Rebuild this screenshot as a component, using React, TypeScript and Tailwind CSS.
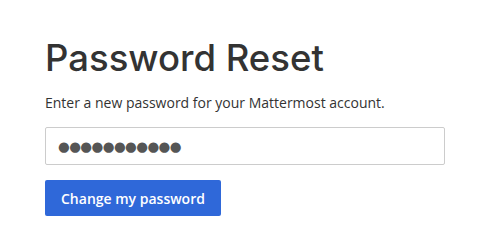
export default function App() {
  return (
    <div className="min-h-screen bg-white px-[45px] pt-[34px]" style={{ fontFamily: '"Open Sans", sans-serif' }}>
      <h1 className="text-[36.5px] font-[550] leading-[48px] text-[#333]" style={{ fontFamily: 'Inter, "Open Sans", sans-serif' }}>
        Password Reset
      </h1>
      <p className="mt-[11px] text-[14px] leading-[20px] text-[#333]">Enter a new password for your Mattermost account.</p>
      <div className="mt-[14px] w-[400px]">
        <input
          type="text"
          readOnly
          value="●●●●●●●●●●●"
          className="h-[38px] w-full rounded-[2px] border border-[#ccc] px-[12px] text-[13.5px] tracking-[-0.6px] text-[#555] outline-none"
          style={{ fontFamily: '"DejaVu Sans", sans-serif' }}
        />
      </div>
      <button className="mt-[15px] h-[36px] rounded-[2px] bg-[#2f68d9] px-[16px] text-[14px] font-semibold text-white">
        Change my password
      </button>
    </div>
  );
}
